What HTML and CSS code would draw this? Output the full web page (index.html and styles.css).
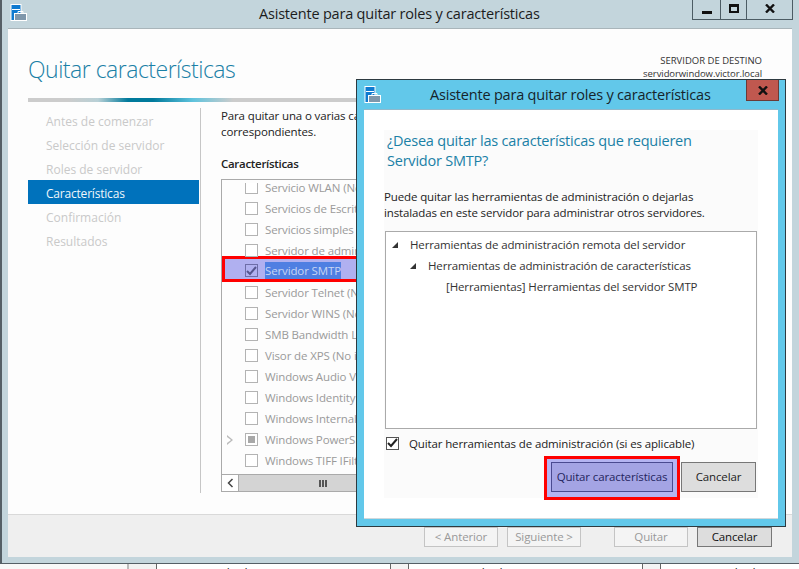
FILE: index.html
```html
<!DOCTYPE html>
<html>
<head>
    <title>Asistente para quitar roles y características</title>
    <link rel="stylesheet" href="styles.css">
</head>
<body>
    <div class="desktop">
        <div class="window">
            <div class="titlebar">
                <svg class="appicon" width="18" height="18" viewBox="0 0 18 18">
                    <rect x="1" y="0.5" width="10" height="16" fill="#0f7ad0" stroke="#fff"/>
                    <rect x="2" y="5" width="8" height="1" fill="#fff"/>
                    <rect x="4.5" y="9.5" width="12" height="7" fill="#7f97ab" stroke="#fff"/>
                    <path d="M8 9V7.5h5V9" fill="none" stroke="#fff"/>
                </svg>
                <div class="title">Asistente para quitar roles y características</div>
                <div class="winbtns">
                    <div class="winbtn btn-min"><span class="min-bar"></span></div>
                    <div class="winbtn btn-max"><span class="max-box"></span></div>
                    <div class="winbtn btn-close">
                        <svg width="10" height="9" viewBox="0 0 10 9"><path d="M1 0.5L9 8.5M9 0.5L1 8.5" stroke="#111" stroke-width="2.4"/></svg>
                    </div>
                </div>
            </div>
            <div class="client">
                <div class="head">
                    <h1>Quitar características</h1>
                    <div class="dest">
                        <div>SERVIDOR DE DESTINO</div>
                        <div class="dest-name">servidorwindow.victor.local</div>
                    </div>
                </div>
                <div class="rule"></div>
                <div class="body">
                    <div class="nav">
                        <div class="nav-item">Antes de comenzar</div>
                        <div class="nav-item">Selección de servidor</div>
                        <div class="nav-item">Roles de servidor</div>
                        <div class="nav-item active">Características</div>
                        <div class="nav-item">Confirmación</div>
                        <div class="nav-item">Resultados</div>
                    </div>
                    <div class="pane">
                        <p class="intro">Para quitar una o varias características instaladas, active las casillas<br>correspondientes.</p>
                        <div class="label">Características</div>
                        <div class="listbox">
                            <div class="rows">
                                <div class="row"><span class="cb"></span>Servicio WLAN (No instalado)</div>
                                <div class="row"><span class="cb"></span>Servicios de Escritura a mano</div>
                                <div class="row"><span class="cb"></span>Servicios simples de TCP/IP</div>
                                <div class="row"><span class="cb"></span>Servidor de administración</div>
                                <div class="row selected"><span class="cb">
                                    <svg width="11" height="10" viewBox="0 0 11 10"><path d="M1 5l3 3 6-7" fill="none" stroke="#55558f" stroke-width="2"/></svg>
                                </span><span class="sel-text">Servidor SMTP</span></div>
                                <div class="row"><span class="cb"></span>Servidor Telnet (No instalado)</div>
                                <div class="row"><span class="cb"></span>Servidor WINS (No instalado)</div>
                                <div class="row"><span class="cb"></span>SMB Bandwidth Limit</div>
                                <div class="row"><span class="cb"></span>Visor de XPS (No instalado)</div>
                                <div class="row"><span class="cb"></span>Windows Audio Video</div>
                                <div class="row"><span class="cb"></span>Windows Identity</div>
                                <div class="row"><span class="cb"></span>Windows Internal</div>
                                <div class="row"><span class="arrow"></span><span class="cb"><span class="partial"></span></span>Windows PowerShell</div>
                                <div class="row"><span class="cb"></span>Windows TIFF IFilter</div>
                            </div>
                            <div class="hscroll">
                                <div class="sb-btn">
                                    <svg width="7" height="10" viewBox="0 0 7 10"><path d="M5.5 1L1.5 5l4 4" fill="none" stroke="#444" stroke-width="1.5"/></svg>
                                </div>
                                <div class="sb-thumb"><span class="grip"></span></div>
                            </div>
                        </div>
                    </div>
                </div>
                <div class="footer">
                    <div class="fbtn">&lt; Anterior</div>
                    <div class="fbtn">Siguiente &gt;</div>
                    <div class="fbtn fbtn-gap">Quitar</div>
                    <div class="fbtn fbtn-on">Cancelar</div>
                </div>
            </div>
        </div>
        <div class="strip">
            <div class="strip-cell cell-a"></div>
            <div class="strip-cell cell-b"></div>
            <div class="strip-cell cell-text pad-a">Resultados</div>
            <div class="strip-cell cell-c"></div>
            <div class="strip-cell cell-text pad-b">Resultados</div>
            <div class="strip-cell cell-c"></div>
            <div class="strip-cell cell-last">Resultados</div>
        </div>

        <div class="dialog">
            <div class="dlg-title">
                <svg class="appicon dlg-icon" width="18" height="18" viewBox="0 0 18 18">
                    <rect x="1" y="0.5" width="10" height="16" fill="#0f7ad0" stroke="#fff"/>
                    <rect x="2" y="5" width="8" height="1" fill="#fff"/>
                    <rect x="4.5" y="9.5" width="12" height="7" fill="#7f97ab" stroke="#fff"/>
                    <path d="M8 9V7.5h5V9" fill="none" stroke="#fff"/>
                </svg>
                <div class="dlg-caption">Asistente para quitar roles y características</div>
                <div class="dlg-close">
                    <svg width="10" height="9" viewBox="0 0 10 9"><path d="M1 0.5L9 8.5M9 0.5L1 8.5" stroke="#111" stroke-width="2.4"/></svg>
                </div>
            </div>
            <div class="dlg-client">
                <div class="dlg-panel">
                    <h2>¿Desea quitar las características que requieren<br>Servidor SMTP?</h2>
                    <p class="dlg-text">Puede quitar las herramientas de administración o dejarlas<br>instaladas en este servidor para administrar otros servidores.</p>
                    <div class="tree">
                        <div class="node"><span class="tri"></span>Herramientas de administración remota del servidor</div>
                        <div class="node lvl1"><span class="tri"></span>Herramientas de administración de características</div>
                        <div class="node lvl2">[Herramientas] Herramientas del servidor SMTP</div>
                    </div>
                    <div class="check-line">
                        <span class="cb cb-dark">
                            <svg width="11" height="10" viewBox="0 0 11 10"><path d="M1 5l3 3 6-7" fill="none" stroke="#222" stroke-width="2"/></svg>
                        </span>
                        Quitar herramientas de administración (si es aplicable)
                    </div>
                    <div class="dlg-actions">
                        <div class="highlight"><div class="dbtn dbtn-main">Quitar características</div></div>
                        <div class="dbtn dbtn-cancel">Cancelar</div>
                    </div>
                </div>
            </div>
        </div>
    </div>
</body>
</html>
```

FILE: styles.css
```css
html, body {
    margin: 0;
    padding: 0;
}
body {
    font-family: "Open Sans", "Noto Sans", sans-serif;
    font-size: 11.5px;
    letter-spacing: -0.13px;
    color: #222;
    background: #f6f6f6;
}
.desktop {
    position: relative;
    width: 799px;
    height: 569px;
    overflow: hidden;
}
.window {
    height: 564px;
    box-sizing: border-box;
    background: #c3d5dc;
    border-left: 2px solid #555f66;
    border-bottom: 1px solid #555f66;
    display: flex;
    flex-direction: column;
}
.titlebar {
    height: 28px;
    flex: none;
    display: flex;
    position: relative;
}
.appicon {
    margin: 4px 0 0 8px;
}
.title {
    position: absolute;
    left: 257px;
    top: 3px;
    font-size: 14.5px;
    line-height: 22px;
    letter-spacing: -0.2px;
    color: #1c1c1c;
    white-space: nowrap;
}
.winbtns {
    margin-left: auto;
    margin-right: 6px;
    height: 20px;
    box-sizing: border-box;
    display: flex;
    border: 1px solid #4c5c64;
    border-top: none;
}
.winbtn {
    display: flex;
    align-items: center;
    justify-content: center;
    border-left: 1px solid #4c5c64;
}
.btn-min {
    width: 27px;
    border-left: none;
}
.btn-max {
    width: 25px;
}
.btn-close {
    width: 45px;
}
.min-bar {
    width: 10px;
    height: 3px;
    margin-top: 5px;
    background: #111;
}
.max-box {
    width: 6px;
    height: 4px;
    border: 2px solid #111;
    border-top-width: 3px;
    margin-top: -3px;
}
.btn-close svg {
    margin-top: -3px;
}
.client {
    flex: 1;
    margin: 1px 7px 6px 6px;
    display: flex;
    flex-direction: column;
    background: #fdfdfd;
    box-shadow: 0 -1px 0 #a9b5ba;
    min-height: 0;
}
.head {
    height: 69px;
    box-sizing: border-box;
    padding: 0 30px 0 20px;
    display: flex;
    justify-content: space-between;
    flex: none;
}
.head h1 {
    margin: 22px 0 0;
    font-size: 23px;
    line-height: 36px;
    font-weight: 300;
    letter-spacing: -0.5px;
    color: #1a80a6;
}
.dest {
    margin-top: 25px;
    font-size: 9.5px;
    line-height: 13px;
    letter-spacing: 0;
    text-align: right;
    color: #333;
}
.dest-name {
    letter-spacing: -0.07px;
}
.rule {
    height: 4px;
    margin: 0 20px;
    flex: none;
    background: linear-gradient(90deg, #ccc 0, #ccc 40px, #b8d0d6 70px, #007a9c 100px, #007a9c 125px, #5fc3dd 165px, #ccc 205px, #ccc 100%);
}
.body {
    flex: 1;
    min-height: 0;
    display: flex;
    margin: 6px 0 0 20px;
}
.nav {
    width: 171px;
    flex: none;
    font-size: 12px;
    letter-spacing: 0;
}
.nav-item {
    height: 24px;
    line-height: 28px;
    padding-left: 18px;
    color: #c9c9c9;
}
.nav-item.active {
    background: #0072bc;
    color: #eef6fb;
    letter-spacing: -0.2px;
}
.pane {
    flex: 1;
    height: 385px;
    border-left: 1px solid #c6c6c6;
    margin-left: 1px;
    padding-left: 20px;
}
.intro {
    margin: 0;
    line-height: 16px;
    white-space: nowrap;
    color: #222;
}
.label {
    margin-top: 16px;
    font-weight: 600;
    line-height: 16px;
    letter-spacing: -0.3px;
}
.listbox {
    width: 400px;
    height: 313px;
    margin-top: 7px;
    box-sizing: border-box;
    border: 1px solid #aaa;
    display: flex;
    flex-direction: column;
    overflow: hidden;
}
.rows {
    flex: 1;
    overflow: hidden;
    min-height: 0;
    margin-top: 3px;
}
.rows .row:first-child {
    margin-top: -6px;
}
.row {
    height: 21px;
    display: flex;
    align-items: center;
    padding-left: 23px;
    color: #9a9a9a;
    white-space: nowrap;
}
.cb {
    width: 11px;
    height: 11px;
    border: 1px solid #b3b3b3;
    background: #fff;
    margin-right: 7px;
    flex: none;
    display: flex;
    align-items: center;
    justify-content: center;
}
.row.selected {
    margin: -5px 0 0 0;
    height: 17px;
    padding: 3px 0 0 20px;
    width: 112px;
    border: 3px solid #f00;
    background: #b0b0f0;
}
.row.selected .cb {
    background: #b0b0f0;
    border-color: #6d6da8;
}
.sel-text {
    background: #4f7fe2;
    color: #c8d6f4;
    line-height: 17px;
}
.arrow {
    width: 0;
    height: 0;
    margin-left: -18px;
    margin-right: 12px;
    border-left: 6px solid transparent;
    border-top: 5px solid transparent;
    border-bottom: 5px solid transparent;
    position: relative;
}
.arrow::before {
    content: "";
    position: absolute;
    left: -6px;
    top: -5px;
    width: 0;
    height: 0;
    border-left: 6px solid #bbb;
    border-top: 5px solid transparent;
    border-bottom: 5px solid transparent;
}
.arrow::after {
    content: "";
    position: absolute;
    left: -6px;
    top: -3px;
    width: 0;
    height: 0;
    border-left: 4px solid #fff;
    border-top: 3px solid transparent;
    border-bottom: 3px solid transparent;
}
.partial {
    width: 7px;
    height: 7px;
    background: #a8a8a8;
}
.hscroll {
    height: 16px;
    flex: none;
    display: flex;
    background: #d4d4d4;
    border-top: 1px solid #aaa;
}
.sb-btn {
    width: 16px;
    background: #fff;
    border-right: 1px solid #aaa;
    display: flex;
    align-items: center;
    justify-content: center;
}
.sb-thumb {
    width: 166px;
    margin-left: 1px;
    background: #d4d4d4;
    display: flex;
    align-items: center;
    justify-content: center;
}
.grip {
    width: 8px;
    height: 7px;
    background: repeating-linear-gradient(90deg, #555 0, #555 2px, transparent 2px, transparent 3px);
}
.footer {
    height: 43px;
    flex: none;
    box-sizing: border-box;
    background: #efefef;
    border-top: 1px solid #d9d9d9;
    display: flex;
    justify-content: flex-end;
    padding: 12px 20px 0 0;
    gap: 9px;
}
.fbtn {
    width: 74px;
    height: 20px;
    box-sizing: border-box;
    border: 1px solid #c4c4c4;
    background: #f4f4f4;
    color: #999;
    text-align: center;
    line-height: 18px;
}
.fbtn-gap {
    margin-left: 24px;
}
.fbtn-on {
    width: 75px;
    border-color: #777;
    background: #ddd;
    color: #111;
}
.strip {
    height: 5px;
    display: flex;
    overflow: hidden;
    font-size: 12px;
    line-height: 20px;
    color: #222;
}
.strip-cell {
    box-sizing: border-box;
    border-right: 1px solid #666;
    white-space: nowrap;
}
.cell-a {
    width: 129px;
    border-right: 2px solid #bbb;
    background: #f8f8f8;
}
.cell-b {
    width: 28px;
    background: #f2f2f2;
}
.cell-text {
    width: 234px;
    background: #fff;
}
.pad-a {
    padding-left: 43px;
}
.pad-b {
    padding-left: 46px;
}
.cell-c {
    width: 18px;
    background: #f4f4f4;
}
.cell-last {
    flex: 1;
    padding-left: 47px;
    border-right: none;
    background: #fff;
}

.dialog {
    position: absolute;
    left: 356px;
    top: 79px;
    width: 430px;
    height: 448px;
    box-sizing: border-box;
    border: 1px solid #2d3a40;
    background: #62c8ea;
    display: flex;
    flex-direction: column;
}
.dlg-title {
    height: 30px;
    flex: none;
    display: flex;
    position: relative;
}
.dlg-icon {
    margin: 6px 0 0 7px;
}
.dlg-caption {
    position: absolute;
    left: 73px;
    top: 4px;
    font-size: 14.5px;
    line-height: 22px;
    letter-spacing: -0.2px;
    color: #16242a;
    white-space: nowrap;
}
.dlg-close {
    position: absolute;
    left: 389px;
    top: 0;
    width: 33px;
    height: 21px;
    box-sizing: border-box;
    border: 1px solid #6b3a36;
    border-top: none;
    background: #c0584f;
    display: flex;
    align-items: center;
    justify-content: center;
}
.dlg-client {
    flex: 1;
    margin: 0 7px 8px 7px;
    padding: 20px;
    background: #fff;
    box-shadow: 0 -1px 0 #8fb9cc, 0 1px 0 #d0d8dc;
    min-height: 0;
}
.dlg-panel {
    height: 100%;
    background: #fbfbfb;
    display: flex;
    flex-direction: column;
}
.dlg-panel > * {
    flex: none;
}
.dlg-panel h2 {
    margin: 0;
    padding: 1px 0 0 3px;
    font-size: 14.5px;
    line-height: 20px;
    font-weight: 400;
    letter-spacing: -0.22px;
    color: #1a80a6;
    white-space: nowrap;
}
.dlg-text {
    margin: 18px 0 0;
    line-height: 16px;
    white-space: nowrap;
}
.tree {
    margin: 10px 0 0 1px;
    width: 372px;
    height: 198px;
    box-sizing: border-box;
    border: 1px solid #aaa;
    background: #fff;
    padding-top: 2px;
}
.node {
    height: 21px;
    line-height: 21px;
    padding-left: 24px;
    position: relative;
    white-space: nowrap;
    color: #333;
}
.lvl1 {
    padding-left: 42px;
}
.lvl2 {
    padding-left: 60px;
}
.tri {
    position: absolute;
    left: 6px;
    top: 8px;
    width: 0;
    height: 0;
    border-left: 6px solid transparent;
    border-bottom: 6px solid #333;
}
.lvl1 .tri {
    left: 24px;
}
.check-line {
    display: flex;
    align-items: center;
    margin: 6px 0 0 2px;
    height: 16px;
}
.cb-dark {
    border-color: #555;
    margin-right: 10px;
}
.dlg-actions {
    display: flex;
    justify-content: flex-end;
    align-items: flex-start;
    margin-top: 5px;
    padding-right: 2px;
}
.highlight {
    padding: 3px 4px 5px 4px;
    border: 3px solid #f00;
    background: #b4b4f2;
    margin-right: 1px;
}
.dbtn {
    width: 75px;
    height: 30px;
    box-sizing: border-box;
    border: 1px solid #777;
    background: #ddd;
    text-align: center;
    line-height: 28px;
    white-space: nowrap;
}
.dbtn-cancel {
    margin-top: 6px;
}
.dbtn-main {
    width: 122px;
    background: #a4a4e4;
    border-color: #4a4a90;
    color: #25255e;
}
```
